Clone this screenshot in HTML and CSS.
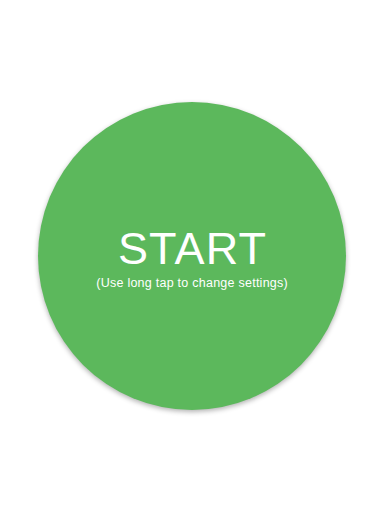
FILE: index.html
```html
<!DOCTYPE html>
<html lang="en">
<head>
<meta charset="utf-8">
<title>Start</title>
<link rel="stylesheet" href="styles.css">
</head>
<body>
<main class="screen">
  <button class="start-button" type="button">
    <span class="start-label">START</span>
    <span class="start-hint">(Use long tap to change settings)</span>
  </button>
</main>
</body>
</html>
```
FILE: styles.css
```css
html, body {
  margin: 0;
  padding: 0;
  background: #ffffff;
}
.screen {
  width: 384px;
  height: 512px;
  display: flex;
  align-items: center;
  justify-content: center;
}
.start-button {
  width: 308px;
  height: 308px;
  border-radius: 50%;
  border: none;
  padding: 0;
  margin: 0;
  background: #5cb85c;
  box-shadow: 0 2px 5px rgba(0, 0, 0, 0.3);
  display: flex;
  flex-direction: column;
  align-items: center;
  justify-content: center;
  color: #ffffff;
  font-family: "Liberation Sans", Arial, sans-serif;
  cursor: pointer;
}
.start-label {
  font-size: 45px;
  line-height: 52px;
  font-weight: normal;
  letter-spacing: 1.2px;
  padding-left: 1.2px;
  padding-top: 2px;
}
.start-hint {
  font-size: 12.5px;
  line-height: 16px;
  letter-spacing: 0.25px;
  padding-left: 0.25px;
}
```
